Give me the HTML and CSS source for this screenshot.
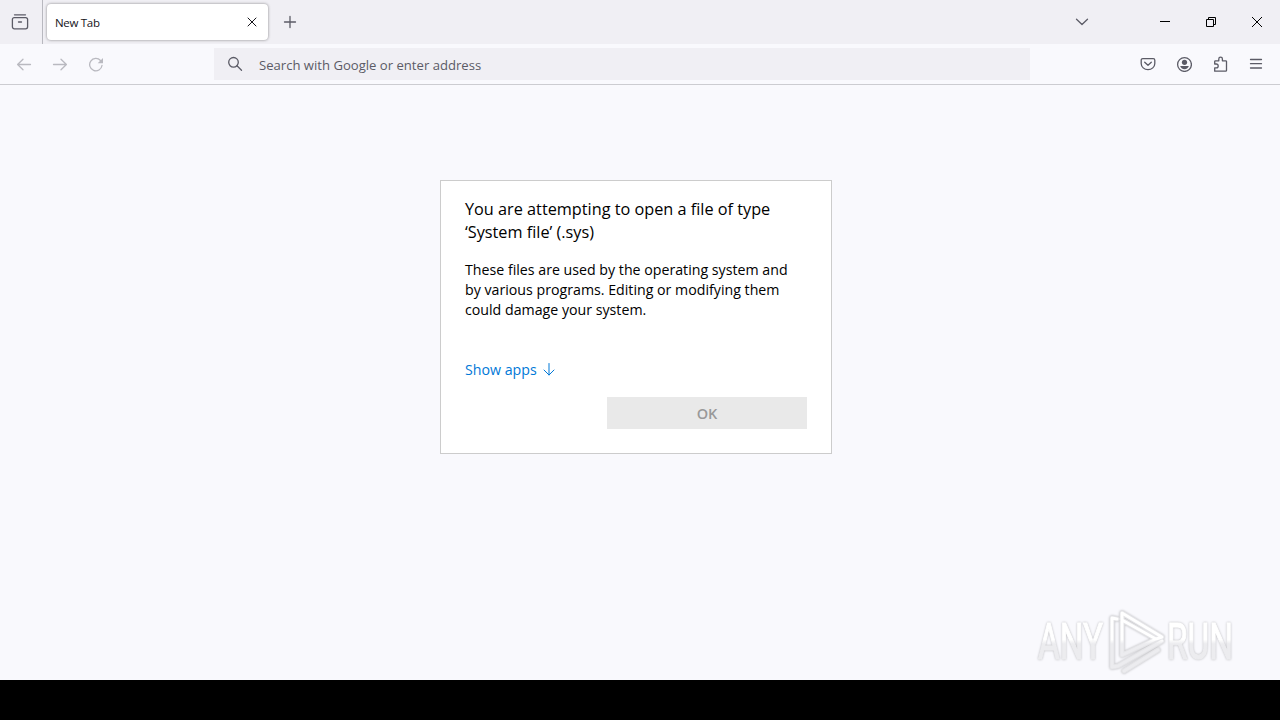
FILE: index.html
```html
<!DOCTYPE html>
<html lang="en">
<head>
    <meta charset="UTF-8">
    <title>New Tab</title>
    <link rel="stylesheet" href="styles.css">
</head>
<body>
    <div class="browser">
        <div class="tab-bar">
            <div class="firefox-view">
                <svg width="18" height="18" viewBox="0 0 18 18"><path d="M3.5 1.8h11M3.2 4.7h11.6a1.8 1.8 0 0 1 1.8 1.8v7.3a2 2 0 0 1-2 2H3.4a2 2 0 0 1-2-2V6.5a1.8 1.8 0 0 1 1.8-1.8zM7.500 9h3"/></svg>
            </div>
            <div class="tab">
                <span class="tab-title">New Tab</span>
                <svg class="tab-close" width="10" height="10" viewBox="0 0 10 10"><path d="M1 1l8 8M9 1L1 9"/></svg>
            </div>
            <svg class="new-tab" width="14" height="14" viewBox="0 0 14 14"><path d="M7 1.500v11M1.500 7h11"/></svg>
            <div class="window-controls">
                <svg class="all-tabs" width="14" height="14" viewBox="0 0 14 14"><path d="M1.500 4.300l5.500 5.200 5.500-5.200"/></svg>
                <svg class="window-button" width="12" height="12" viewBox="0 0 12 12"><path d="M1 5.500h10"/></svg>
                <svg class="window-button" width="12" height="12" viewBox="0 0 12 12"><path d="M1.500 3.500h7v7h-7zM3.500 3.500v-2h7v7h-2"/></svg>
                <svg class="window-button" width="12" height="12" viewBox="0 0 12 12"><path d="M1 1l10 10M11 1L1 11"/></svg>
            </div>
        </div>

        <div class="toolbar">
            <div class="navigation">
                <svg width="16" height="16" viewBox="0 0 16 16"><path d="M14.500 8.500H1.700M7 3.200L1.600 8.500 7 13.800"/></svg>
                <svg width="16" height="16" viewBox="0 0 16 16"><path d="M1.500 8.500h12.800M9 3.200l5.400 5.300L9 13.800"/></svg>
                <svg width="16" height="16" viewBox="0 0 16 16"><path d="M14 9.500A6.200 6.200 0 1 1 12.500 4.500"/><path class="filled" d="M15 2v5.200H9.700z"/></svg>
            </div>
            <div class="url-bar">
                <svg width="16" height="16" viewBox="0 0 16 16"><circle cx="6.500" cy="6.300" r="4.800"/><path d="M10 9.800l4.500 4.500"/></svg>
                <span class="placeholder">Search with Google or enter address</span>
            </div>
            <div class="tools">
                <svg width="16" height="16" viewBox="0 0 16 16"><path d="M2.800 2.600h10.400a1.600 1.600 0 0 1 1.600 1.600v3.200a6.800 6.300 0 0 1-13.600 0V4.200a1.600 1.600 0 0 1 1.600-1.600z"/><path d="M4.700 6.200L8 9.300l3.300-3.100"/></svg>
                <svg width="16" height="16" viewBox="0 0 16 16"><circle cx="8.500" cy="8.500" r="6.900"/><circle class="filled" cx="8.500" cy="6.300" r="2.600"/><path class="filled" d="M4.200 10h8.600c-.4 2-2.200 3.200-4.300 3.200S4.600 12 4.200 10z"/></svg>
                <svg width="16" height="16" viewBox="0 0 16 16"><path d="M2.700 15.200v-3.400h1.600a1.900 1.900 0 0 0 0-3.800H2.700V5.500a.7.7 0 0 1 .7-.7h3.400V3a1.800 1.800 0 0 1 3.600 0v1.800h3.300a.8.8 0 0 1 .8.8v8.800a.8.800 0 0 1-.8.800z"/></svg>
                <svg width="16" height="16" viewBox="0 0 16 16"><path d="M2.500 3.500h11M2.500 7.700h11M2.500 12h11"/></svg>
            </div>
        </div>

        <div class="content">
            <div class="dialog">
                <h1 class="dialog-title">You are attempting to open a file of type<br>‘System file’ (.sys)</h1>
                <p class="dialog-text">These files are used by the operating system and<br>by various programs. Editing or modifying them<br>could damage your system.</p>
                <a class="show-apps">Show apps
                    <svg width="12" height="14" viewBox="0 0 12 14"><path d="M6 .5V12M1 7l5 5 5-5"/></svg>
                </a>
                <button class="ok-button" disabled>OK</button>
            </div>

            <svg class="watermark" width="220" height="76" viewBox="0 0 220 76">
                <defs>
                    <linearGradient id="fade" gradientUnits="userSpaceOnUse" x1="0" y1="0" x2="0" y2="72">
                        <stop offset="0.48" stop-color="#ffffff"/>
                        <stop offset="0.54" stop-color="#ececef"/>
                    </linearGradient>
                </defs>
                <text x="8" y="54" textLength="65" lengthAdjust="spacingAndGlyphs">ANY</text>
                <text x="137" y="54" textLength="66" lengthAdjust="spacingAndGlyphs">RUN</text>
                <path class="logo-edge" d="M87 14l-5-1v49l6-1 44-25M92 50V8l40 24-6 2-34-19M92 50l34-16M94 66l34-21"/>
                <path class="logo-line" d="M87 14l-5-1v49l6-1 44-25M92 50V8l40 24-6 2-34-19M92 50l34-16M94 66l34-21"/>
            </svg>
        </div>
        <div class="bottom-bar"></div>
    </div>
</body>
</html>
```
FILE: styles.css
```css
body {
    margin: 0;
    font-family: "Open Sans", "Noto Sans", sans-serif;
    background: #f9f9fd;
}

svg {
    display: block;
    flex: none;
    fill: none;
    stroke: #5b5b66;
    stroke-width: 1.3;
    stroke-linecap: round;
    stroke-linejoin: round;
}

.filled {
    fill: #5b5b66;
    stroke: none;
}

.browser {
    display: flex;
    flex-direction: column;
    width: 1280px;
    height: 720px;
    overflow: hidden;
}

/* Tabs */
.tab-bar {
    display: flex;
    align-items: center;
    height: 44px;
    background: #f0eff4;
}

.firefox-view {
    display: flex;
    align-items: center;
    box-sizing: border-box;
    width: 43px;
    height: 44px;
    padding-left: 11px;
    border-right: 1px solid #b8b8bf;
}

.tab {
    display: flex;
    align-items: center;
    justify-content: space-between;
    box-sizing: border-box;
    width: 221px;
    height: 36px;
    margin-left: 4px;
    padding: 0 11px 0 8px;
    background: #fff;
    border-radius: 4px;
    box-shadow: 0 0 3px rgba(0, 0, 0, 0.45);
}

.tab-title {
    font-size: 11.5px;
    letter-spacing: -0.3px;
    color: #15141a;
}

.tab-close {
    stroke: #15141a;
    stroke-width: 1;
}

.new-tab {
    margin-left: 15px;
}

.window-controls {
    display: flex;
    align-items: center;
    margin-left: auto;
    padding-right: 17px;
}

.all-tabs {
    margin-right: 70px;
}

.window-button {
    stroke: #000;
    stroke-width: 1;
    stroke-linecap: butt;
    stroke-linejoin: miter;
}

.window-button + .window-button {
    margin-left: 34px;
}

/* Navigation */
.toolbar {
    display: flex;
    align-items: center;
    box-sizing: border-box;
    height: 41px;
    background: #f9f9fd;
    border-bottom: 1px solid #ccccd1;
}

.navigation {
    display: flex;
    gap: 20px;
    width: 198px;
    padding-left: 16px;
    opacity: 0.4;
}

.url-bar {
    display: flex;
    align-items: center;
    box-sizing: border-box;
    width: 816px;
    height: 32px;
    padding-left: 13px;
    background: #f0eff4;
}

.placeholder {
    margin: 2px 0 0 16px;
    font-size: 13.1px;
    color: #5b5b66;
}

.tools {
    display: flex;
    gap: 20px;
    margin-left: auto;
    padding-right: 16px;
}

/* Page */
.content {
    position: relative;
    height: 595px;
    background: #f9f9fd;
}

.dialog {
    display: flex;
    flex-direction: column;
    align-items: flex-start;
    box-sizing: border-box;
    width: 392px;
    height: 274px;
    margin: 95px 0 0 440px;
    padding: 17px 24px 24px;
    background: #fff;
    border: 1px solid #ccc;
    color: #000;
    white-space: nowrap;
}

.dialog-title {
    margin: 0;
    font-size: 16.25px;
    font-weight: 400;
    line-height: 23px;
}

.dialog-text {
    margin: 16px 0 0;
    font-size: 14.2px;
    line-height: 20px;
}

.show-apps {
    display: flex;
    align-items: center;
    gap: 6px;
    margin-top: 40px;
    font-size: 14.2px;
    line-height: 20px;
    color: #0078d7;
}

.show-apps svg {
    stroke: #0078d7;
    stroke-width: 1;
}

.ok-button {
    align-self: flex-end;
    width: 200px;
    height: 32px;
    margin-top: 17px;
    padding: 0;
    background: #e9e9e9;
    border: 0;
    font-family: inherit;
    font-size: 14.5px;
    font-weight: 600;
    color: #999;
}

.watermark {
    position: absolute;
    left: 1030px;
    top: 520px;
    filter: drop-shadow(0 0 1px rgba(0, 0, 0, 0.25));
}

.watermark text {
    font-family: Roboto, sans-serif;
    font-size: 50px;
    fill: url(#fade);
    stroke: url(#fade);
    stroke-width: 1;
}

.logo-edge {
    stroke: #e4e4e7;
    stroke-width: 5;
}

.logo-line {
    stroke: url(#fade);
    stroke-width: 3;
}

.bottom-bar {
    flex: 1;
    background: #000;
}
```
